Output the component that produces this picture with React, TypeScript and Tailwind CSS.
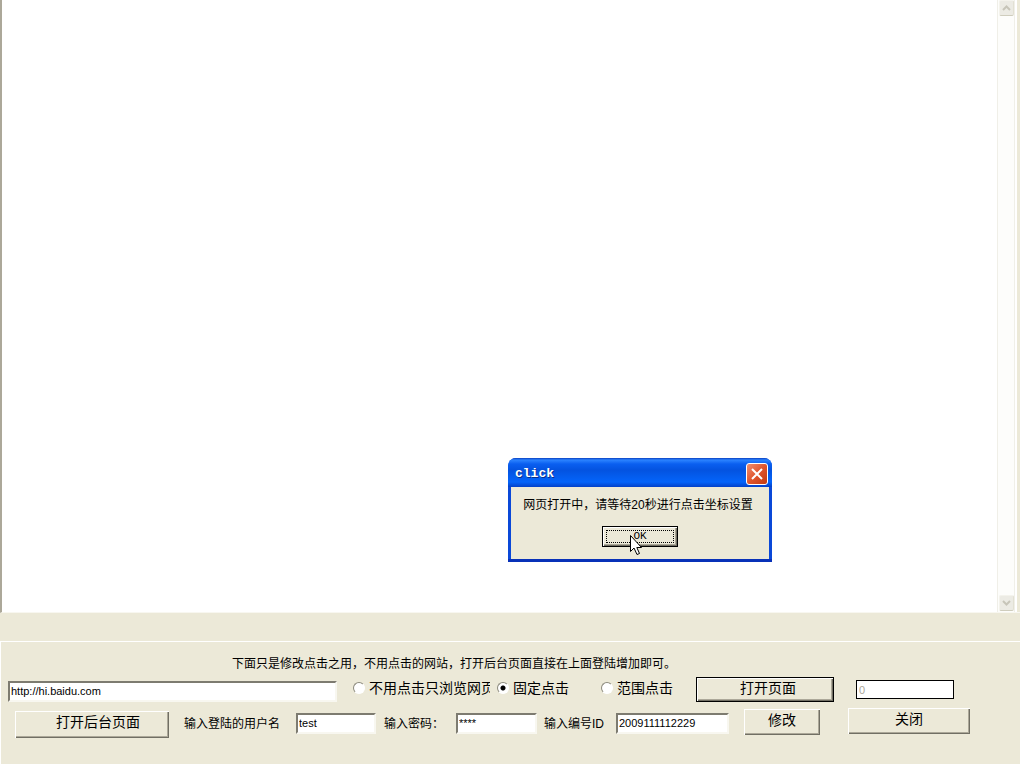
import React from "react"
import clsx from "clsx"

type ButtonProps = React.ButtonHTMLAttributes<HTMLButtonElement> & { isDefault?: boolean }

const ClassicButton = ({ isDefault, className, children, ...props }: ButtonProps) => (
    <button
        type="button"
        className={clsx(
            "shrink-0 bg-[#ece9d8] text-sm leading-none whitespace-nowrap",
            isDefault
                ? "border border-black shadow-[inset_1px_1px_0_#fff,inset_-1px_-1px_0_#716f64,inset_-2px_-2px_0_#aca899]"
                : "shadow-[inset_1px_1px_0_#fff,inset_-1px_-1px_0_#716f64,inset_-2px_-2px_0_#aca899]",
            className,
        )}
        {...props}
    >
        {children}
    </button>
)

const TextBox = ({ className, ...props }: React.InputHTMLAttributes<HTMLInputElement>) => (
    <input
        type="text"
        className={clsx(
            "h-[21px] min-w-0 border-2 border-t-[#7d7b70] border-l-[#7d7b70] border-r-[#f8f7f0] border-b-[#f8f7f0] bg-white px-px pb-px text-[11px] leading-4 outline-none",
            className,
        )}
        {...props}
    />
)

type RadioProps = { label: string; className?: string; defaultChecked?: boolean }

const Radio = ({ label, className, defaultChecked }: RadioProps) => (
    <label className={clsx("mb-1 flex shrink-0 items-center gap-1 overflow-hidden text-sm leading-5 whitespace-nowrap", className)}>
        <input
            type="radio"
            name="click-mode"
            defaultChecked={defaultChecked}
            className="size-3 shrink-0 appearance-none rounded-full border border-t-[#8b897c] border-l-[#8b897c] border-r-white border-b-white bg-white checked:bg-[radial-gradient(circle,#000_0,#000_2px,#fff_3px)]"
        />
        {label}
    </label>
)

const ScrollArrow = ({ direction }: { direction: "up" | "down" }) => (
    <button
        type="button"
        aria-label={direction === "up" ? "Scroll up" : "Scroll down"}
        className="flex h-4 w-[15px] items-center justify-center rounded-xs border border-t-[#f4f3ec] border-r-[#e2e0d3] border-b-[#cfcdbd] border-l-[#f4f3ec] bg-[#ecebe4]"
    >
        <svg width="9" height="6" viewBox="0 0 9 6" fill="none" stroke="#c7c5b9" strokeWidth="2">
            <path d={direction === "up" ? "M1 5 4.5 1.5 8 5" : "M1 1 4.5 4.5 8 1"} />
        </svg>
    </button>
)

const BrowserPane = () => (
    <main className="flex min-h-0 flex-1 border-b border-l-2 border-b-[#f8f7f0] border-l-[#aca899] bg-white">
        <div className="flex-1" />
        <div className="flex w-[18px] flex-col items-center justify-between border-x border-[#f0efe8] bg-[#fdfdfb] pb-px">
            <ScrollArrow direction="up" />
            <ScrollArrow direction="down" />
        </div>
        <div className="w-[5px] border-r-3 border-r-[#ece9d8] bg-white" />
    </main>
)

const ControlPanel = () => (
    <form className="mt-7 h-[123px] border-t border-l border-white pt-3">
        <p className="pl-[231px] text-xs leading-5">
            下面只是修改点击之用，不用点击的网站，打开后台页面直接在上面登陆增加即可。
        </p>
        <div className="mt-[3px] flex h-[25px] items-center pr-[66px] pl-[7px]">
            <TextBox aria-label="URL" defaultValue="http://hi.baidu.com" className="mt-1 flex-1" />
            <Radio label="不用点击只浏览网页" className="ml-4 w-[137px]" />
            <Radio label="固定点击" className="ml-[7px] w-[104px]" defaultChecked />
            <Radio label="范围点击" className="w-[95px]" />
            <ClassicButton isDefault className="h-[25px] w-[138px] pr-0.5 pb-1 pl-2">
                打开页面
            </ClassicButton>
            <input
                type="text"
                disabled
                aria-label="计数"
                defaultValue="0"
                className="ml-[22px] h-[19px] w-[98px] border border-black bg-white px-0.5 text-[11px] text-[#aca899]"
            />
        </div>
        <div className="mt-2 flex h-7 items-center pr-[50px] pl-[14px] text-xs">
            <ClassicButton className="h-[27px] w-[154px] pb-1 pl-3">打开后台页面</ClassicButton>
            <label htmlFor="username" className="ml-[15px] w-28 shrink-0">
                输入登陆的用户名
            </label>
            <TextBox id="username" defaultValue="test" className="mb-0.5 w-20" />
            <label htmlFor="password" className="ml-2 w-[72px] shrink-0">
                输入密码：
            </label>
            <TextBox id="password" defaultValue="****" autoComplete="off" className="mb-0.5 w-[81px]" />
            <label htmlFor="record" className="ml-[7px] w-[72px] shrink-0">
                输入编号ID
            </label>
            <TextBox id="record" defaultValue="2009111112229" className="mb-0.5 w-[113px]" />
            <ClassicButton className="mb-1 ml-[15px] h-[26px] w-[76px] pb-1">修改</ClassicButton>
            <ClassicButton className="mb-1.5 ml-auto h-[26px] w-[122px] pb-1">关闭</ClassicButton>
        </div>
    </form>
)

const MessageBox = () => (
    <section
        role="dialog"
        aria-labelledby="message-title"
        className="absolute top-[458px] left-[508px] flex h-[104px] w-[264px] flex-col rounded-t-lg border-b-3 border-[#0831b8] bg-[#0a48d8] px-[3px]"
    >
        <header className="-mx-[3px] flex h-[29px] shrink-0 items-center justify-between rounded-t-lg bg-[linear-gradient(#0a3fc0_0,#2b83ff_2px,#0a5ff0_6px,#0453e0_12px,#0464fa_24px,#0340c8_100%)] pt-0.5 pr-1 pl-[7px]">
            <h1
                id="message-title"
                className="font-['Liberation_Mono',monospace] text-[13px] leading-4 font-bold text-white [text-shadow:1px_1px_0_#0a2f8c]"
            >
                click
            </h1>
            <button
                type="button"
                aria-label="Close"
                className="flex size-[22px] items-center justify-center rounded-[3px] border border-white bg-linear-to-br from-[#ee8e70] via-[#e0552c] to-[#c23a10]"
            >
                <svg width="12" height="12" viewBox="0 0 12 12" stroke="#fff" strokeWidth="2">
                    <path d="M1 1 11 11M11 1 1 11" />
                </svg>
            </button>
        </header>
        <div className="flex flex-1 flex-col items-center bg-[#ece9d8] pt-2">
            <p className="pr-1 text-xs leading-5 whitespace-nowrap">网页打开中，请等待20秒进行点击坐标设置</p>
            <ClassicButton isDefault className="mt-[11px] h-[21px] w-[76px] p-[3px]">
                <span className="flex h-full items-center justify-center border border-dotted border-black font-['Liberation_Mono',monospace] text-[11px]">
                    OK
                </span>
            </ClassicButton>
        </div>
        <svg className="absolute top-[77px] left-[122px]" width="13" height="21" viewBox="0 0 13 21" fill="#fff" stroke="#000">
            <path d="M.5.5V16.5L4 13 7 19.5 9.5 18.5 6.8 12.5H11.5Z" />
        </svg>
    </section>
)

export default function App() {
    return (
        <div className="relative flex h-screen flex-col overflow-hidden bg-[#ece9d8] font-['Liberation_Sans','Noto_Sans_CJK_SC',sans-serif] text-black">
            <BrowserPane />
            <ControlPanel />
            <MessageBox />
        </div>
    )
}
